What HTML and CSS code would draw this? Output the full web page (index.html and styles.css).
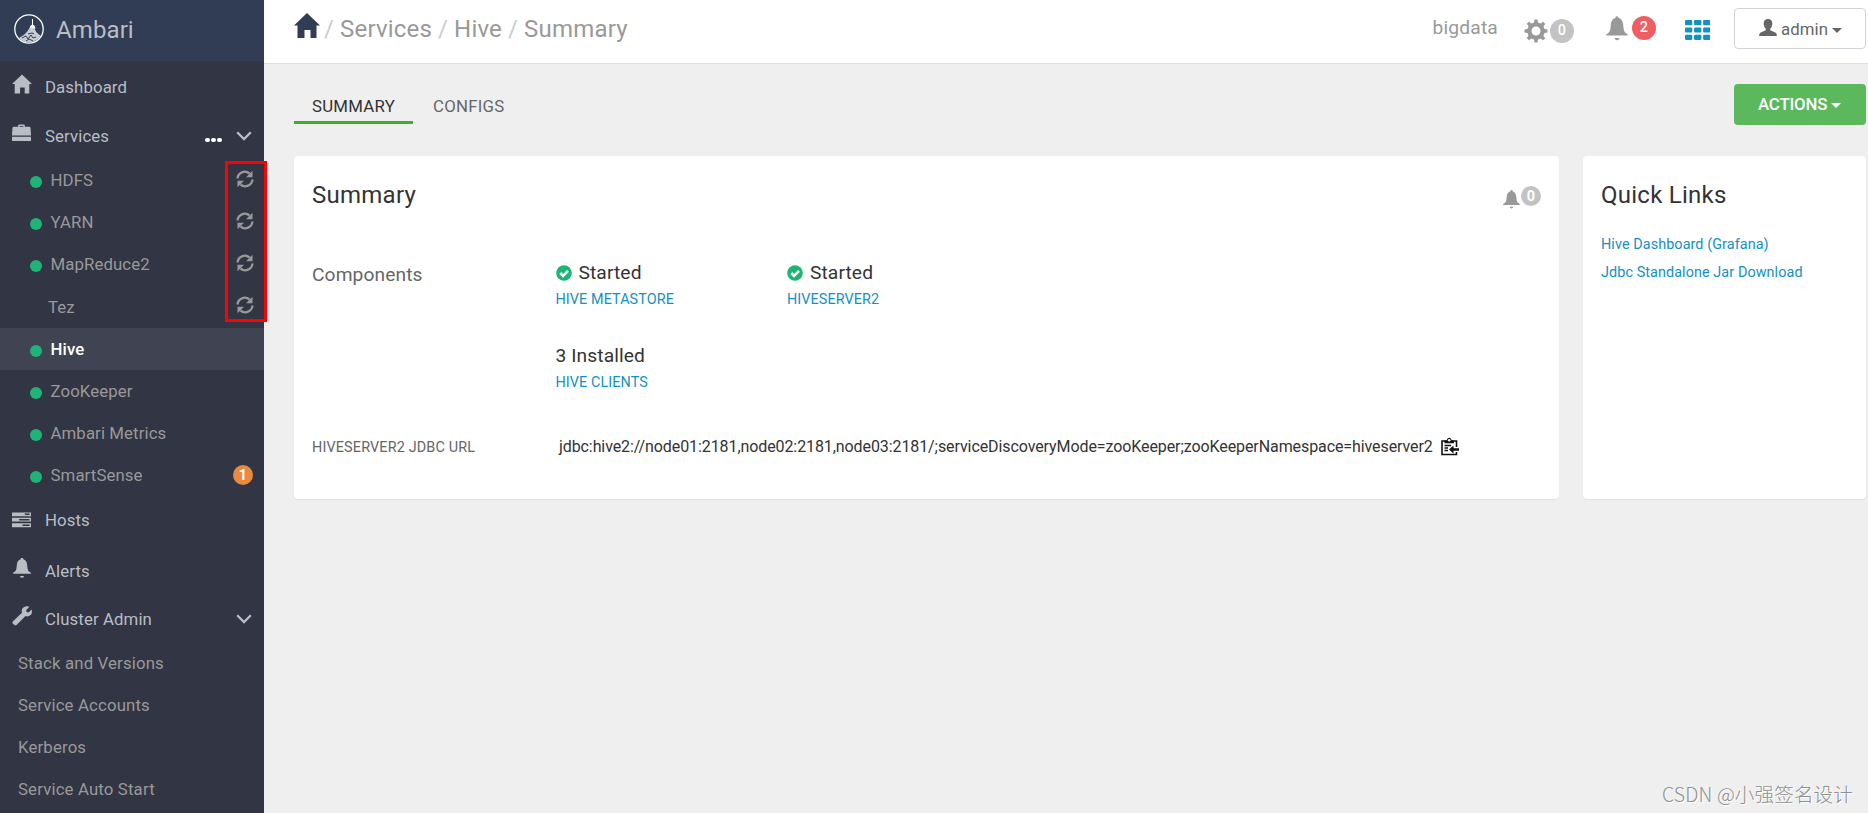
FILE: index.html
```html
<!DOCTYPE html>
<html lang="en">
<head>
  <meta charset="UTF-8" />
  <meta name="viewport" content="width=device-width, initial-scale=1" />
  <title>Ambari</title>
  <link rel="stylesheet" href="styles.css">
</head>
<body>
  <!-- icon set -->
  <svg class="sprite" width="0" height="0">
    <symbol id="i-home" viewBox="0 0 26 25"><path d="M13 0l13 12.5h-3.5V25H16.500v-8h-6v8H3.500V12.500H0z"/></symbol>
    <symbol id="i-case" viewBox="0 0 20 18"><path fill-rule="evenodd" d="M6.500 2.500V1.200Q6.500 0 7.700 0h4.600q1.200 0 1.200 1.200v1.300H18q1.300 0 1.500 1L20 10.500v1H0v-1l.5-7q.2-1 1.500-1zM8 2.500h4V1.500H8zM0 13h20v3.500q0 1-1 1H1q-1 0-1-1z"/></symbol>
    <symbol id="i-chevron" viewBox="0 0 16 10"><path d="M1.200 1.200L8 8l6.800-6.800" fill="none" stroke="currentColor" stroke-width="2.300"/></symbol>
    <symbol id="i-refresh" viewBox="0 0 18 18"><g fill="none" stroke="currentColor" stroke-width="2.300"><path d="M1.500 8.500a7.300 7.300 0 0 1 12-5"/><path d="M16.500 9.500a7.300 7.300 0 0 1-12 5"/></g><path d="M16.500 .8v6.400H10zM1.500 17.200v-6.400H8z"/></symbol>
    <symbol id="i-hosts" viewBox="0 0 20 16"><path fill-rule="evenodd" d="M0 0h20v4H0zM13.500 1.200v1.600H18.500V1.200zM0 5.700h20v4H0zM7.500 7v1.500h11V7zM0 11.500h20v4H0zM11 12.700v1.600h7.500v-1.600z"/></symbol>
    <symbol id="i-bell" viewBox="0 0 22 24"><path d="M9.300 1.500a1.700 1.700 0 0 1 3.400 0C16 2.500 17 5.500 17.300 9c.3 5 1 7 4 8.500.7.500.7 1.500 0 1.500H.7c-.7 0-.7-1 0-1.500 3-1.500 3.700-3.500 4-8.500C5 5.500 6 2.500 9.300 1.500zM8.500 21.500h5q-.7 2.300-2.500 2.300t-2.500-2.300z"/></symbol>
    <symbol id="i-wrench" viewBox="0 0 20 20"><path d="M17.500.8l-3.300 3.300.4 2 2 .4L19.500 3.600c.9 2.200.3 4.300-1 5.500-1.400 1.300-3.300 1.600-5 1L4.500 19q-1 .9-2 0l-1.700-1.500q-.9-1 0-2L10 6.800c-.7-1.800-.3-3.600 1-5C12.600.2 15.300-.4 17.500.8z"/></symbol>
    <symbol id="i-gear" viewBox="-12 -12 24 24"><path fill-rule="evenodd" d="M-2-8.500l.5-3h3l.5 3 2.700 1.100 2.500-1.800 2.100 2.100L7.500-4.700 8.500-2l3 .5v3l-3 .5-1.100 2.700 1.800 2.500-2.100 2.100-2.500-1.800L2 8.500l-.5 3h-3l-.5-3-2.700-1.100-2.500 1.800-2.100-2.100 1.800-2.500L-8.500 2l-3-.5v-3l3-.5 1.100-2.700-1.800-2.500 2.100-2.100 2.500 1.800zM0-4.500a4.500 4.500 0 1 0 0 9 4.500 4.500 0 1 0 0-9z"/></symbol>
    <symbol id="i-grid" viewBox="0 0 24 19"><g><rect width="7" height="5" rx="1"/><rect x="8.700" width="7" height="5" rx="1"/><rect x="17.400" width="7" height="5" rx="1"/><rect y="7" width="7" height="5" rx="1"/><rect x="8.700" y="7" width="7" height="5" rx="1"/><rect x="17.400" y="7" width="7" height="5" rx="1"/><rect y="14" width="7" height="5" rx="1"/><rect x="8.700" y="14" width="7" height="5" rx="1"/><rect x="17.400" y="14" width="7" height="5" rx="1"/></g></symbol>
    <symbol id="i-user" viewBox="0 0 18 17"><path d="M9 0c2.800 0 4.300 1.700 4.300 4.500 0 2.300-.8 4-2 5.200v1.500l5 2.300q1.500.8 1.500 2.200V17H.2v-1.300q0-1.400 1.500-2.200l5-2.300V9.700c-1.200-1.200-2-2.900-2-5.200C4.700 1.700 6.200 0 9 0z"/></symbol>
    <symbol id="i-ok" viewBox="0 0 16 16"><circle cx="8" cy="8" r="7.800"/><path d="M4.300 8l2.700 2.800 5-5" fill="none" stroke="#fff" stroke-width="2.600"/></symbol>
    <symbol id="i-paste" viewBox="0 0 18 18"><path d="M1 3.500h14.500V17H1z" fill="#fff" stroke="#111" stroke-width="1.600"/><path d="M3.500 5.700V3h2.200Q6 .3 8.200.3T10.700 3H13v2.700z"/><circle cx="8.200" cy="2.800" r="1.300" fill="#fff"/><path d="M3.500 8H10M3.500 10.500h3.500M3.500 13h3.500" stroke="#111" stroke-width="1.300"/><path d="M13.500 9.500H18v5h-4.500z" fill="#fff"/><path d="M8 12l4.500-4v2.800H18v2.400h-5.500V16z"/></symbol>
  </svg>

  <div class="app">
    <aside class="sidebar">
      <div class="brand">
        <svg class="logo" viewBox="0 0 30 30"><circle cx="15" cy="15" r="14.200" fill="none" stroke="#fff" stroke-width="1.300"/><path d="M18.500 5v7M17 11.500h3l1 3h-5z" fill="#fff" stroke="#fff" stroke-width="1"/><path d="M15.500 14q-3 6-10.500 10Q14 33 25 24l1.500-2.500Q21.500 19 20.500 14z" fill="#c6ccd5"/><path d="M8 24l4-2 2 3 3-4 2 3 3-1M12 27l3-2 4 2M14 20l4-1 2 1" fill="none" stroke="#313d54" stroke-width="1"/></svg>
        <span>Ambari</span>
      </div>
      <nav>
        <a class="item"><svg class="ico i20"><use href="#i-home"/></svg>Dashboard</a>
        <a class="item"><svg class="ico"><use href="#i-case"/></svg>Services
          <span class="more"><i></i><i></i><i></i></span>
          <svg class="chevron"><use href="#i-chevron"/></svg>
        </a>
        <div class="services">
          <a class="sub"><i class="dot"></i>HDFS<svg class="refresh"><use href="#i-refresh"/></svg></a>
          <a class="sub"><i class="dot"></i>YARN<svg class="refresh"><use href="#i-refresh"/></svg></a>
          <a class="sub"><i class="dot"></i>MapReduce2<svg class="refresh"><use href="#i-refresh"/></svg></a>
          <a class="sub no-dot">Tez<svg class="refresh"><use href="#i-refresh"/></svg></a>
          <a class="sub active"><i class="dot"></i>Hive</a>
          <a class="sub"><i class="dot"></i>ZooKeeper</a>
          <a class="sub"><i class="dot"></i>Ambari Metrics</a>
          <a class="sub"><i class="dot"></i>SmartSense<b class="alert-count">1</b></a>
          <div class="highlight"></div>
        </div>
        <a class="item hosts"><svg class="ico i-hosts"><use href="#i-hosts"/></svg>Hosts</a>
        <a class="item alerts"><svg class="ico i20"><use href="#i-bell"/></svg>Alerts</a>
        <a class="item admin"><svg class="ico i20"><use href="#i-wrench"/></svg>Cluster Admin
          <svg class="chevron"><use href="#i-chevron"/></svg>
        </a>
        <div class="admin-menu">
          <a class="sub">Stack and Versions</a>
          <a class="sub">Service Accounts</a>
          <a class="sub">Kerberos</a>
          <a class="sub">Service Auto Start</a>
        </div>
      </nav>
    </aside>

    <div class="main">
      <header class="topbar">
        <div class="breadcrumbs">
          <svg class="home"><use href="#i-home"/></svg>
          <i>/</i><span>Services</span><i>/</i><span>Hive</span><i>/</i><span>Summary</span>
        </div>
        <div class="tools">
          <span class="cluster">bigdata</span>
          <span class="ops"><svg class="gear"><use href="#i-gear"/></svg><b class="badge">0</b></span>
          <span class="notif"><svg class="bell"><use href="#i-bell"/></svg><b class="badge red">2</b></span>
          <svg class="grid"><use href="#i-grid"/></svg>
          <button class="user"><svg><use href="#i-user"/></svg>admin<i class="caret"></i></button>
        </div>
      </header>

      <div class="toolbar">
        <div class="tabs">
          <a class="tab current">SUMMARY</a>
          <a class="tab">CONFIGS</a>
        </div>
        <button class="actions">ACTIONS<i class="caret"></i></button>
      </div>

      <div class="panels">
        <section class="panel summary">
          <div class="panel-head">
            <h2>Summary</h2>
            <span class="panel-alerts"><svg><use href="#i-bell"/></svg><b>0</b></span>
          </div>
          <div class="components">
            <div class="label">Components</div>
            <div class="component">
              <div class="state"><svg><use href="#i-ok"/></svg>Started</div>
              <a>HIVE METASTORE</a>
            </div>
            <div class="component">
              <div class="state"><svg><use href="#i-ok"/></svg>Started</div>
              <a>HIVESERVER2</a>
            </div>
            <div class="component second">
              <div class="state">3 Installed</div>
              <a>HIVE CLIENTS</a>
            </div>
          </div>
          <div class="jdbc">
            <div class="jdbc-label">HIVESERVER2 JDBC URL</div>
            <div class="jdbc-url">jdbc:hive2://node01:2181,node02:2181,node03:2181/;serviceDiscoveryMode=zooKeeper;zooKeeperNamespace=hiveserver2</div>
            <svg class="paste"><use href="#i-paste"/></svg>
          </div>
        </section>

        <section class="panel links">
          <h2>Quick Links</h2>
          <a>Hive Dashboard (Grafana)</a>
          <a>Jdbc Standalone Jar Download</a>
        </section>
      </div>
    </div>
  </div>
  <div class="watermark">CSDN @小强签名设计</div>
</body>
</html>
```

FILE: styles.css
```css
* {
  box-sizing: border-box;
}
body {
  margin: 0;
  background: #efefef;
  color: #333;
  font-family: Roboto, "Liberation Sans", sans-serif;
  font-size: 16.8px;
  line-height: 24px;
  letter-spacing: .1px;
  overflow: hidden;
}
svg {
  display: block;
  flex: none;
  fill: currentColor;
}
.sprite {
  position: absolute;
}
button {
  font: inherit;
  letter-spacing: inherit;
}
h2 {
  margin: 0;
  font-size: 24px;
  font-weight: 400;
  line-height: 28px;
  letter-spacing: .25px;
}
.app {
  display: flex;
  height: 813px;
}

/* sidebar */
.sidebar {
  width: 264px;
  flex: none;
  background: #323544;
  color: #b8bec4;
}
.brand {
  display: flex;
  align-items: center;
  height: 61px;
  padding: 0 0 3px 14px;
  background: #313d54;
  font-size: 24px;
}
.brand span {
  margin: 2px 0 0 12px;
}
.logo {
  width: 30px;
  height: 30px;
  margin-top: -1px;
}
.item {
  display: flex;
  align-items: center;
  height: 49px;
  padding: 2px 12px 0 12px;
}
.ico {
  width: 19px;
  height: 18px;
  margin: -5px 14px 0 0;
}
.i20 {
  width: 20px;
  height: 20px;
  margin-right: 13px;
}
.i-hosts {
  height: 16px;
  margin-top: 0;
}
.more {
  display: flex;
  gap: 1px;
  margin: 8px 14px 0 auto;
}
.more i {
  width: 5px;
  height: 4px;
  border-radius: 2px;
  background: #fff;
}
.chevron {
  width: 16px;
  height: 10px;
}
.admin .chevron {
  margin-left: auto;
}
.services {
  position: relative;
  height: 337px;
}
.highlight {
  position: absolute;
  left: 225px;
  top: 2px;
  width: 42px;
  height: 161px;
  border: 3px solid #f00;
}
.sub {
  display: flex;
  align-items: center;
  height: 42.1px;
  padding: 0 9px 0 30px;
  color: #999;
}
.services .sub {
  height: 42.2px;
}
.sub.active {
  background: #404351;
  color: #fff;
  font-weight: 500;
}
.no-dot {
  padding-left: 48px;
}
.dot {
  width: 12px;
  height: 12px;
  margin: 4px 8.500px 0 0;
  border-radius: 50%;
  background: #1eb475;
}
.refresh {
  width: 18px;
  height: 18px;
  margin: -3px 1px 0 auto;
}
.alert-count {
  width: 20px;
  height: 20px;
  margin: 0 2px 0 auto;
  border-radius: 10px;
  background: #e98a40;
  color: #fff;
  font-size: 14.4px;
  line-height: 21px;
  text-align: center;
}
.hosts {
  height: 45px;
}
.alerts {
  height: 51px;
  margin: 3px 0 -1px;
}
.admin {
  height: 47px;
  margin-bottom: 1px;
}
.admin-menu {
  letter-spacing: .15px;
}
.admin-menu .sub {
  padding-left: 18px;
}

/* top bar */
.main {
  flex: 1;
  min-width: 0;
}
.topbar {
  display: flex;
  justify-content: space-between;
  height: 64px;
  padding: 0 2px 0 30px;
  background: #fff;
  border-bottom: 1px solid #ddd;
}
.breadcrumbs {
  display: flex;
  padding-top: 17px;
  color: #999;
  font-size: 24px;
  letter-spacing: .2px;
}
.breadcrumbs i {
  width: 22px;
  color: #ccc;
  font-style: normal;
  text-align: center;
}
.breadcrumbs .home {
  width: 26px;
  height: 25px;
  margin: -4px -2px 0 0;
  color: #313d54;
}
.tools {
  display: flex;
  align-items: flex-start;
  color: #999;
}
.cluster {
  margin: 16px 26px 0 0;
  font-size: 19.2px;
  letter-spacing: .2px;
}
.ops,
.notif {
  display: flex;
}
.ops {
  margin: 19px 32px 0 0;
}
.notif {
  margin: 16px 29px 0 0;
}
.gear {
  width: 24px;
  height: 24px;
  margin-right: 2px;
}
.bell {
  width: 22px;
  height: 25px;
  margin-right: 4px;
}
.badge {
  width: 24px;
  height: 24px;
  border-radius: 50%;
  background: #c3c3c3;
  color: #fff;
  font-size: 14.4px;
  font-weight: 500;
  text-align: center;
}
.badge.red {
  background: #f05e61;
}
.grid {
  width: 25px;
  height: 20px;
  margin: 20px 24px 0 0;
  color: #1491c1;
}
.user,
.actions {
  display: flex;
  align-items: center;
  width: 132px;
  height: 41px;
  padding: 0 0 0 24px;
  border-radius: 4px;
}
.user {
  margin-top: 8px;
  border: 1px solid #cfd3d7;
  background: #fff;
  color: #666;
}
.user svg {
  width: 18px;
  height: 17px;
  margin: -2px 4px 0 0;
}
.caret {
  margin: 3px 0 0 4px;
  border: 5px solid transparent;
  border-top-color: currentColor;
  border-bottom: 0;
}

/* tabs */
.toolbar {
  display: flex;
  justify-content: space-between;
  padding: 20px 2px 0 30px;
}
.tabs {
  display: flex;
  gap: 2px;
  letter-spacing: .25px;
}
.tab {
  height: 40px;
  padding: 10px 18px 0;
  color: #666;
}
.tab.current {
  width: 119px;
  border-bottom: 3px solid #3fae2a;
  color: #333;
}
.actions {
  padding: 0 0 2px 24px;
  border: 0;
  background: #5cb85c;
  color: #fff;
  font-weight: 500;
  letter-spacing: -.15px;
}

/* panels */
.panels {
  display: flex;
  gap: 24px;
  padding: 31px 2px 0 30px;
}
.panel {
  height: 343px;
  padding: 25px 18px 0;
  border-radius: 4px;
  background: #fff;
  box-shadow: 0 1px 1px rgba(0, 0, 0, .06);
}
.panel a {
  color: #1491c1;
  font-size: 14.4px;
  letter-spacing: .08px;
}
.summary {
  flex: 1;
  min-width: 0;
}
.panel-head {
  display: flex;
  justify-content: space-between;
}
.panel-alerts {
  display: flex;
  height: 28px;
  color: #999;
}
.panel-alerts svg {
  width: 17px;
  height: 19px;
  margin: 9px 1px 0 0;
}
.panel-alerts b {
  width: 20px;
  height: 20px;
  margin-top: 5px;
  border-radius: 10px;
  background: #c3c3c3;
  color: #fff;
  font-size: 14.4px;
  line-height: 21px;
  text-align: center;
}
.components {
  display: grid;
  grid-template-columns: 243.500px 231.500px 1fr;
  row-gap: 32px;
  padding-top: 52px;
  font-size: 19.2px;
}
.label {
  margin-top: 2px;
  color: #666;
}
.component {
  display: flex;
  flex-direction: column;
  gap: 3px;
}
.component.second {
  grid-column: 2;
}
.state {
  display: flex;
  align-items: center;
}
.state svg {
  width: 16px;
  height: 16px;
  margin-right: 7px;
  color: #1eb475;
}
.jdbc {
  display: flex;
  margin-top: 40px;
}
.jdbc-label {
  width: 247px;
  padding-top: 1px;
  color: #666;
  font-size: 14.4px;
  letter-spacing: .15px;
}
.jdbc-url {
  margin-right: 8px;
  font-size: 16px;
  letter-spacing: -.09px;
  white-space: nowrap;
}
.paste {
  width: 18px;
  height: 19px;
  margin-top: 2px;
  color: #111;
}
.links {
  display: flex;
  flex-direction: column;
  width: 283px;
}
.links h2 {
  margin-bottom: 24px;
}
.links a {
  height: 28px;
}
.watermark {
  position: absolute;
  right: 15px;
  bottom: 7px;
  color: #8f8f8f;
  font-family: "Noto Sans CJK SC", sans-serif;
  font-size: 19.600px;
  font-weight: 300;
  text-shadow: 1px 1px 0 #fff;
}
```
